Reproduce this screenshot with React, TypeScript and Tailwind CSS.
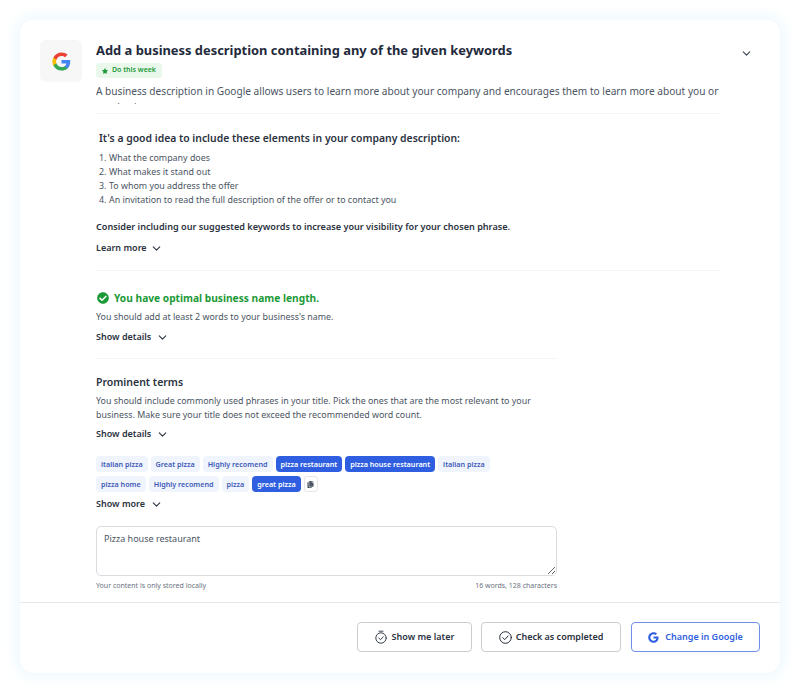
import {ChevronDown} from "lucide-react";
import {FaCheckCircle, FaCopy, FaStar} from "react-icons/fa";

type Tag = {
  label: string;
  active?: boolean;
}

const tagsFirst: Tag[] = [
  {label: 'italian pizza'},
  {label: 'Great pizza'},
  {label: 'Highly recomend'},
  {label: 'pizza restaurant', active: true},
  {label: 'pizza house restaurant', active: true},
  {label: 'italian pizza'},
];

const tagsSecond: Tag[] = [
  {label: 'pizza home'},
  {label: 'Highly recomend'},
  {label: 'pizza'},
  {label: 'great pizza', active: true},
];

const elements = [
  'What the company does',
  'What makes it stand out',
  'To whom you address the offer',
  'An invitation to read the full description of the offer or to contact you',
];

function GoogleLogo(props: {size: number}) {
  return (
    <svg width={props.size} height={props.size} viewBox="0 0 48 48">
      <path fill="#4285F4" d="M46 24.5c0-1.6-.1-3.1-.4-4.5H24v8.8h12.4c-.5 2.9-2.1 5.3-4.6 7v5.8h7.4C43.5 37.6 46 31.600 46 24.500z" />
      <path fill="#34A853" d="M24 47c6.200 0 11.400-2 15.200-5.500l-7.400-5.800c-2 1.400-4.700 2.200-7.800 2.200-6 0-11-4-12.900-9.500H3.500v5.900C7.300 41.900 15 47 24 47z" />
      <path fill="#FBBC05" d="M11.100 28.400c-.5-1.400-.7-2.900-.7-4.400s.3-3 .7-4.400v-5.900H3.500C2 16.800 1 20.300 1 24s1 7.200 2.500 10.300l7.600-5.900z" />
      <path fill="#EA4335" d="M24 10.100c3.400 0 6.400 1.200 8.800 3.400l6.600-6.600C35.400 3.200 30.200 1 24 1 15 1 7.300 6.100 3.500 13.700l7.600 5.900C13 14.100 18 10.100 24 10.100z" />
    </svg>
  );
}

function GoogleMono() {
  return (
    <svg width="11" height="11" viewBox="0 0 48 48" fill="#2f5fe0">
      <path d="M46 24.500c0-1.600-.1-3.100-.4-4.500H24v8.800h12.400c-.5 2.900-2.100 5.300-4.600 7-2 1.400-4.700 2.200-7.800 2.200-7.600 0-13.600-6.100-13.600-13.900S16.400 10.100 24 10.100c3.400 0 6.400 1.200 8.800 3.400l6.600-6.600C35.400 3.200 30.200 1 24 1 11.300 1 1 11.300 1 24s10.300 23 23 23c6.200 0 11.400-2 15.200-5.500C43.500 37.600 46 31.600 46 24.500z" />
    </svg>
  );
}

function LaterIcon() {
  return (
    <svg width="12" height="14" viewBox="0 0 12 14" fill="none" stroke="#374151" strokeWidth="1" strokeLinecap="round" strokeLinejoin="round">
      <circle cx="6" cy="8" r="5.200" />
      <path d="M4 1.200h4" />
      <path d="M3.800 8l1.700 1.700 2.800-2.900" />
    </svg>
  );
}

function DoneIcon() {
  return (
    <svg width="13" height="13" viewBox="0 0 13 13" fill="none" stroke="#1f2937" strokeWidth="1" strokeLinecap="round" strokeLinejoin="round">
      <circle cx="6.500" cy="6.500" r="5.800" />
      <path d="M3.800 6.700l1.900 1.900 3.500-3.700" />
    </svg>
  );
}

function Toggle(props: {label: string; gap: string}) {
  return (
    <div className={`flex items-center font-semibold text-[9px] leading-[14px] text-[#2b3240] ${props.gap}`}>
      <span>{props.label}</span>
      <ChevronDown size={13} strokeWidth={2} />
    </div>
  );
}

function TagChip(props: {tag: Tag}) {
  const {label, active} = props.tag;
  return (
    <span
      className={
        active
          ? 'h-4 px-[5px] rounded-[4px] bg-[#2f5fe0] text-white text-[7.200px] font-semibold leading-4'
          : 'h-4 px-[5px] rounded-[4px] bg-[#f0f4fc] text-[#3d5bb8] text-[7.200px] font-semibold leading-4'
      }
    >
      {label}
    </span>
  );
}

export default function App() {
  return (
    <div className="w-[800px] h-[693px] bg-white p-5 font-['Noto_Sans',sans-serif]">
      <div className="h-[653px] rounded-[14px] bg-white shadow-[0_0_14px_5px_#eef9ff] flex flex-col">
        <div className="flex-1 flex pt-5 pl-5">
          <div className="w-[42px] h-[42px] shrink-0 rounded-[6px] bg-[#f7f7f7] flex items-center justify-center">
            <GoogleLogo size={19} />
          </div>

          <div className="w-[624px] ml-[14px]">
            <h1 className="text-[12.900px] leading-5 font-bold text-[#232a3b]">
              Add a business description containing any of the given keywords
            </h1>
            <div className="mt-[3px] flex w-fit items-center h-[15px] px-[6px] gap-[4px] rounded-[3px] bg-[#eaf8ec] text-[#1c9a37] text-[7px] font-semibold">
              <FaStar size={6} />
              <span>Do this week</span>
            </div>
            <p className="mt-[5px] h-[21px] overflow-hidden text-[10.130px] leading-4 text-[#4b5563]">
              A business description in Google allows users to learn more about your company and encourages them to learn more about you or purchasing
            </p>
            <div className="mt-[9px] border-t border-[#f3f4f6]" />

            <div className="pl-[3px]">
              <h2 className="mt-4 text-[10.400px] leading-4 font-semibold text-[#2b3240]">
                It's a good idea to include these elements in your company description:
              </h2>
              <ol className="mt-[5px] text-[8.900px] leading-[14px] text-[#4b5563]">
                {elements.map((item, index) => (
                  <li key={item} className="flex">
                    <span className="w-[10px]">{index + 1}.</span>
                    <span>{item}</span>
                  </li>
                ))}
              </ol>
            </div>
            <p className="mt-[13px] text-[9.100px] leading-[14px] font-semibold text-[#2b3240]">
              Consider including our suggested keywords to increase your visibility for your chosen phrase.
            </p>
            <div className="mt-[7px]">
              <Toggle label="Learn more" gap="gap-[3px]" />
            </div>
            <div className="mt-[15px] border-t border-[#f3f4f6]" />

            <div className="mt-[19px] flex items-center gap-[5px] text-[#1c9a37]">
              <FaCheckCircle size={12} className="ml-[1px]" />
              <span className="text-[10.200px] leading-4 font-bold">You have optimal business name length.</span>
            </div>
            <p className="mt-1 text-[8.900px] leading-[14px] text-[#4b5563]">
              You should add at least 2 words to your business's name.
            </p>
            <div className="mt-[6px]">
              <Toggle label="Show details" gap="gap-[5px]" />
            </div>

            <div className="w-[461px]">
              <div className="mt-[14px] border-t border-[#f3f4f6]" />
              <h3 className="mt-[15px] text-[10.500px] leading-4 font-semibold text-[#2b3240]">Prominent terms</h3>
              <p className="mt-1 text-[8.900px] leading-[14px] text-[#4b5563]">
                You should include commonly used phrases in your title. Pick the ones that are the most relevant to your business. Make sure your title does not exceed the recommended word count.
              </p>
              <div className="mt-[5px]">
                <Toggle label="Show details" gap="gap-[5px]" />
              </div>
              <div className="mt-[15px] flex gap-[3px]">
                {tagsFirst.map((tag, index) => <TagChip key={index} tag={tag} />)}
              </div>
              <div className="mt-1 flex gap-[3px]">
                {tagsSecond.map((tag, index) => <TagChip key={index} tag={tag} />)}
                <span className="w-[14px] h-4 rounded-[3px] border border-[#e5e7eb] flex items-center justify-center text-[#4b5563]">
                  <FaCopy size={7} />
                </span>
              </div>
              <div className="mt-[5px]">
                <Toggle label="Show more" gap="gap-[5px]" />
              </div>
              <textarea
                readOnly
                value="Pizza house restaurant"
                className="mt-[15px] block w-full h-[50px] rounded-[5px] border border-[#d8dbe0] px-[7px] pt-[5px] text-[9px] leading-[14px] text-[#4b5563] outline-none"
              />
              <div className="mt-[5px] flex justify-between text-[7px] leading-[10px] text-[#6b7280]">
                <span>Your content is only stored locally</span>
                <span>16 words, 128 characters</span>
              </div>
            </div>
          </div>

          <ChevronDown size={13} strokeWidth={2} className="ml-5 mt-[7px] text-[#374151]" />
        </div>

        <div className="h-[71px] border-t border-[#e5e7eb] pt-[19px] pr-5 flex justify-end gap-[9px]">
          <button className="w-[115px] h-[30px] rounded-[4px] border border-[#c9ccd1] flex items-center justify-center gap-[5px] text-[9px] font-semibold text-[#2b3240]">
            <LaterIcon />
            Show me later
          </button>
          <button className="w-[140px] h-[30px] rounded-[4px] border border-[#c9ccd1] flex items-center justify-center gap-1 text-[9px] font-semibold text-[#2b3240]">
            <DoneIcon />
            Check as completed
          </button>
          <button className="w-[129px] h-[30px] ml-px rounded-[4px] border border-[#6f90e6] flex items-center justify-center gap-[6px] text-[9px] font-semibold text-[#2f5fe0]">
            <GoogleMono />
            Change in Google
          </button>
        </div>
      </div>
    </div>
  );
}
